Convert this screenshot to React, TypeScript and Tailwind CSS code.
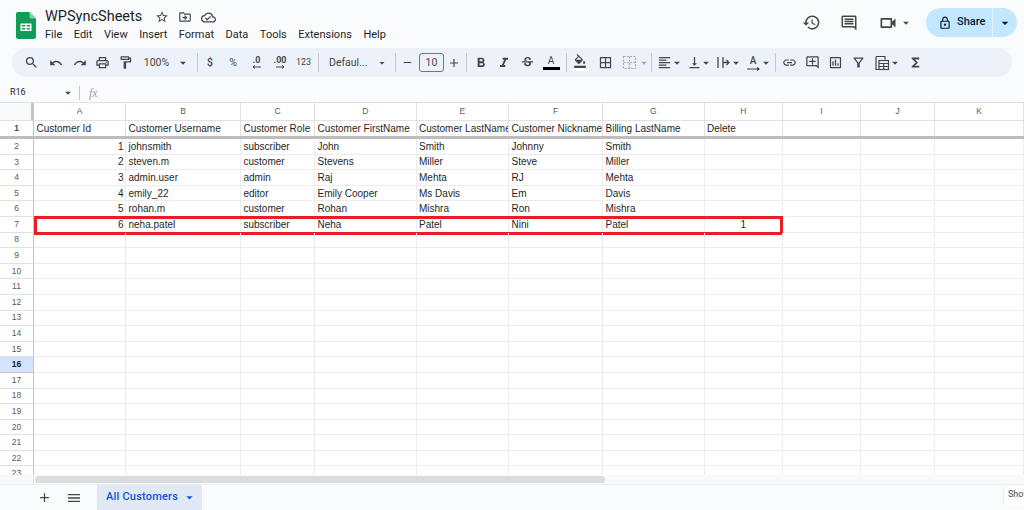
import React from 'react';
import {
  MdAdd, MdArrowDropDown, MdBorderAll, MdFormatAlignLeft, MdFormatBold, MdFormatItalic,
  MdFormatColorFill, MdFunctions, MdLink, MdMenu, MdOutlineAddComment, MdOutlineAssessment,
  MdOutlineCloudDone, MdOutlineComment, MdOutlineDriveFileMove, MdOutlineFilterAlt,
  MdOutlineFormatPaint, MdOutlineLock, MdOutlinePrint, MdOutlineVideocam, MdRedo, MdRemove,
  MdHistory, MdSearch, MdStarBorder, MdStrikethroughS, MdUndo, MdVerticalAlignBottom,
} from 'react-icons/md';

const ROW_CLASS =
  'grid grid-cols-[34px_92px_115px_74px_101.5px_92.5px_94px_101.5px_78.5px_78px_74px_89px]';

const COLUMNS = ['A', 'B', 'C', 'D', 'E', 'F', 'G', 'H', 'I', 'J', 'K'];

const HEADERS = [
  'Customer Id',
  'Customer Username',
  'Customer Role',
  'Customer FirstName',
  'Customer LastName',
  'Customer Nickname',
  'Billing LastName',
  'Delete',
];

const CUSTOMERS = [
  ['1', 'johnsmith', 'subscriber', 'John', 'Smith', 'Johnny', 'Smith', ''],
  ['2', 'steven.m', 'customer', 'Stevens', 'Miller', 'Steve', 'Miller', ''],
  ['3', 'admin.user', 'admin', 'Raj', 'Mehta', 'RJ', 'Mehta', ''],
  ['4', 'emily_22', 'editor', 'Emily Cooper', 'Ms Davis', 'Em', 'Davis', ''],
  ['5', 'rohan.m', 'customer', 'Rohan', 'Mishra', 'Ron', 'Mishra', ''],
  ['6', 'neha.patel', 'subscriber', 'Neha', 'Patel', 'Nini', 'Patel', '1'],
];

const MENU = ['File', 'Edit', 'View', 'Insert', 'Format', 'Data', 'Tools', 'Extensions', 'Help'];

const ROW_NUMBERS = Array.from({ length: 22 }, (_, i) => i + 2);

// small dropdown caret, centred in a narrow slot so neighbours stay put
const Caret: React.FC<{ className?: string }> = ({ className = '' }) => (
  <span className={`flex items-center justify-center text-[#444746] ${className}`}>
    <MdArrowDropDown size={14} />
  </span>
);

const Tool: React.FC<{ className: string; children: React.ReactNode }> = ({ className, children }) => (
  <span className={`flex h-full shrink-0 items-center justify-center text-[#444746] ${className}`}>
    {children}
  </span>
);

const Sep: React.FC<{ className: string }> = ({ className }) => (
  <span className={`h-[19px] w-px shrink-0 bg-[#c7c7c7] ${className}`} />
);

const SheetsLogo = () => (
  <svg width="20" height="27" viewBox="0 0 20 27" className="shrink-0">
    <path d="M2 0h11.5L20 6.5V25a2 2 0 0 1-2 2H2a2 2 0 0 1-2-2V2a2 2 0 0 1 2-2z" fill="#0f9d58" />
    <path d="M13.5 0L20 6.500h-5a1.500 1.500 0 0 1-1.500-1.500z" fill="#87ceac" />
    <path d="M4.500 11.500h11v7.500h-11zM6 13v1.600h3.300V13zm4.700 0v1.600H14V13zM6 16v1.600h3.300V16zm4.700 0v1.600H14V16z" fill="#fff" fillRule="evenodd" />
  </svg>
);

const MergeIcon = () => (
  <svg width="15" height="15" viewBox="0 0 15 15" fill="none" stroke="#a8abad" strokeWidth="1.200" strokeDasharray="2 1.300">
    <rect x="1.500" y="1.500" width="12" height="12" />
    <path d="M7.500 1.500v12M1.500 7.500h12" />
  </svg>
);

const WrapIcon = () => (
  <svg width="15" height="15" viewBox="0 0 15 15" fill="none" stroke="#444746" strokeWidth="1.300">
    <path d="M2 2v11M7 2v11M7 7.500h6M10.500 5l2.500 2.500-2.500 2.500" />
  </svg>
);

const RotateIcon = () => (
  <span className="relative flex h-[17px] w-[14px] flex-col items-center">
    <span className="text-[10px] font-medium leading-[13px]">A</span>
    <svg width="13" height="4" viewBox="0 0 13 4" fill="none" stroke="#444746" strokeWidth="1.200">
      <path d="M0 2h12M10 0.500 12 2l-2 1.500" />
    </svg>
  </span>
);

const TableFnIcon = () => (
  <svg width="16" height="16" viewBox="0 0 16 16" fill="none" stroke="#444746" strokeWidth="1.200">
    <path d="M2 1.500h9v3M2 1.500v13h6" />
    <rect x="5" y="5.500" width="9.500" height="9" />
    <path d="M5 8.500h9.500M5 11.500h9.500M9.700 8.500v6" />
  </svg>
);

const Toolbar = () => (
  <div className="mx-3 flex h-[29px] items-center rounded-full bg-[#edf2fa] pl-[7px] font-['Roboto',sans-serif]">
    <Tool className="w-6"><MdSearch size={15} /></Tool>
    <Tool className="w-[25px]"><MdUndo size={14} /></Tool>
    <Tool className="w-[23px]"><MdRedo size={14} /></Tool>
    <Tool className="w-[23px]"><MdOutlinePrint size={15} /></Tool>
    <Tool className="w-[23px]"><MdOutlineFormatPaint size={15} /></Tool>
    <Tool className="w-[39px] text-[10.500px]">100%</Tool>
    <Caret className="w-[14px]" />
    <Sep className="ml-[7px] mr-[1px]" />
    <Tool className="w-[22px] text-[10.500px] font-medium">$</Tool>
    <Tool className="w-6 text-[10.500px]">%</Tool>
    <Tool className="w-[23px] flex-col text-[9px] font-bold leading-[9px]">
      .0
      <svg width="10" height="4" viewBox="0 0 10 4" fill="none" stroke="#444746" strokeWidth="1"><path d="M9 2H1M3 0.500 1 2l2 1.500" /></svg>
    </Tool>
    <Tool className="w-6 flex-col text-[9px] font-bold leading-[9px]">
      .00
      <svg width="10" height="4" viewBox="0 0 10 4" fill="none" stroke="#444746" strokeWidth="1"><path d="M1 2h8M7 0.500 9 2 7 3.500" /></svg>
    </Tool>
    <Tool className="w-[23px] text-[9px]">123</Tool>
    <Sep className="ml-[3px] mr-[10px]" />
    <Tool className="w-[47px] justify-start text-[10.500px]">Defaul...</Tool>
    <Caret className="w-3" />
    <Sep className="ml-[7px]" />
    <Tool className="w-[22px]"><MdRemove size={13} /></Tool>
    <span className="ml-px flex h-[19px] w-[25px] shrink-0 items-center justify-center rounded-[3px] border border-[#747775] text-[10.500px] text-[#444746]">10</span>
    <Tool className="w-5"><MdAdd size={14} /></Tool>
    <Sep className="ml-[2px] mr-[2px]" />
    <Tool className="w-[23px]"><MdFormatBold size={16} /></Tool>
    <Tool className="w-[23px]"><MdFormatItalic size={16} /></Tool>
    <Tool className="w-6"><MdStrikethroughS size={15} /></Tool>
    <Tool className="w-6 flex-col">
      <span className="text-[10px] leading-[12px]">A</span>
      <span className="h-[3px] w-[17px] bg-black" />
    </Tool>
    <Sep className="ml-[3px]" />
    <Tool className="w-[26px] flex-col">
      <MdFormatColorFill size={14} />
      <span className="h-[3px] w-[17px] bg-white" />
    </Tool>
    <Tool className="w-6"><MdBorderAll size={15} /></Tool>
    <Tool className="w-6"><MergeIcon /></Tool>
    <Tool className="w-[6px] text-[#a8abad]"><MdArrowDropDown size={14} className="shrink-0 text-[#a8abad]" /></Tool>
    <Sep className="ml-[4px] mr-[2px]" />
    <Tool className="w-5"><MdFormatAlignLeft size={15} /></Tool>
    <Tool className="w-[6px]"><MdArrowDropDown size={14} className="shrink-0" /></Tool>
    <Tool className="ml-1 w-5"><MdVerticalAlignBottom size={15} /></Tool>
    <Tool className="w-[6px] -ml-[1px]"><MdArrowDropDown size={14} className="shrink-0" /></Tool>
    <Tool className="ml-1 w-5"><WrapIcon /></Tool>
    <Tool className="w-[6px]"><MdArrowDropDown size={14} className="shrink-0" /></Tool>
    <Tool className="ml-1 w-5"><RotateIcon /></Tool>
    <Tool className="w-[6px]"><MdArrowDropDown size={14} className="shrink-0" /></Tool>
    <Sep className="ml-[6px] mr-[1px]" />
    <Tool className="w-6"><MdLink size={15} /></Tool>
    <Tool className="w-[23px]"><MdOutlineAddComment size={15} /></Tool>
    <Tool className="w-[23px]"><MdOutlineAssessment size={15} /></Tool>
    <Tool className="w-[23px]"><MdOutlineFilterAlt size={15} /></Tool>
    <Tool className="w-[23px]"><TableFnIcon /></Tool>
    <Tool className="w-[6px] -ml-[1px]"><MdArrowDropDown size={14} className="shrink-0" /></Tool>
    <Tool className="ml-2 w-[18px]"><MdFunctions size={15} /></Tool>
  </div>
);

const Header = () => (
  <header className="flex h-[48px] items-start pl-4 pr-[7px] pt-[8px] font-['Roboto',sans-serif]">
    <span className="mt-[4px]"><SheetsLogo /></span>
    <div className="ml-[9px] flex flex-col">
      <div className="flex h-[18px] items-center text-[#444746]">
        <span className="text-[14.500px] leading-[18px] text-[#1f1f1f]">WPSyncSheets</span>
        <MdStarBorder size={14} className="ml-[13px]" />
        <MdOutlineDriveFileMove size={14} className="ml-[9px]" />
        <MdOutlineCloudDone size={15} className="ml-[9px]" />
      </div>
      <nav className="mt-[1px] flex h-[16px] items-center gap-[11.500px] text-[11px] leading-[16px] text-[#1f1f1f]">
        {MENU.map((item) => (
          <span key={item}>{item}</span>
        ))}
      </nav>
    </div>
    <div className="ml-auto flex items-center text-[#444746]">
      <MdHistory size={19} />
      <MdOutlineComment size={18} className="ml-[19px]" />
      <MdOutlineVideocam size={20} className="ml-[20px]" />
      <MdArrowDropDown size={14} className="ml-[1px]" />
      <div className="ml-[13px] flex h-[29px] w-[91px] items-center rounded-full bg-[#c2e7ff] text-[#001d35]">
        <MdOutlineLock size={14} className="ml-[12px]" />
        <span className="ml-[5px] text-[11px] font-medium">Share</span>
        <span className="ml-[7px] h-full w-px bg-[#e3f3ff]" />
        <MdArrowDropDown size={16} className="ml-[4px]" />
      </div>
    </div>
  </header>
);

const FormulaBar = () => (
  <div className="mt-[6px] flex h-[20px] items-center border-b border-[#e1e3e1] font-['Roboto',sans-serif] text-[#444746]">
    <span className="ml-[10px] w-[51px] text-[9px] text-[#1f1f1f]">R16</span>
    <MdArrowDropDown size={14} />
    <span className="ml-[4px] h-[14px] w-px bg-[#c7c7c7]" />
    <span className="ml-[9px] font-['Liberation_Serif',serif] text-[12px] italic text-[#9aa0a6]">fx</span>
  </div>
);

const Grid = () => (
  <div className="h-[372px] overflow-hidden bg-white font-['Liberation_Sans',sans-serif] text-[10px] text-[#1f1f1f]">
    <div className={`${ROW_CLASS} h-[18px]`}>
      <div className="border-b border-r-[3px] border-[#e1e1e1] border-r-[#c4c4c4] bg-[#f8f9fa]" />
      {COLUMNS.map((c) => (
        <div key={c} className="flex items-center justify-center border-b border-r border-[#e1e1e1] text-[8.500px] text-[#575a5a]">
          {c}
        </div>
      ))}
    </div>
    <div className={`${ROW_CLASS} h-[18px] border-b-[3px] border-[#bdbdbd]`}>
      <div className="flex items-center justify-center border-r border-[#c4c4c4] text-[8.500px] font-bold text-[#444746]">1</div>
      {COLUMNS.map((c, i) => (
        <div key={c} className="flex items-center overflow-hidden whitespace-nowrap border-r border-[#e1e1e1] pl-[2.500px]">
          {HEADERS[i]}
        </div>
      ))}
    </div>
    {ROW_NUMBERS.map((n) => {
      const row = CUSTOMERS[n - 2];
      const selected = n === 16;
      return (
        <div key={n} className={`${ROW_CLASS} relative h-[15.600px]`}>
          <div
            className={
              selected
                ? 'flex items-center justify-center border-b border-r border-[#c4c4c4] bg-[#d3e3fd] text-[8.500px] font-bold text-[#0b1f3a]'
                : 'flex items-center justify-center border-b border-r border-[#e1e1e1] border-r-[#c4c4c4] text-[8.500px] text-[#575a5a]'
            }
          >
            {n}
          </div>
          {COLUMNS.map((c, i) => {
            const value = row ? row[i] : '';
            const align =
              i === 0
                ? 'justify-end pr-[1.500px]'
                : i === 7
                  ? 'justify-center'
                  : 'pl-[2.500px]';
            return (
              <div key={c} className={`flex items-center overflow-hidden whitespace-nowrap border-b border-r border-[#ececec] ${align}`}>
                {value}
              </div>
            );
          })}
          {n === 7 && (
            <div className="pointer-events-none absolute -top-[1px] left-[34px] h-[19px] w-[749px] border-[3px] border-[#ed1c24]" />
          )}
        </div>
      );
    })}
  </div>
);

const ScrollBar = () => (
  <div className="flex h-[9px] items-center bg-[#f8f9fa]">
    <div className="h-full w-[34px] border-r border-[#e1e1e1]" />
    <div className="ml-px h-[7px] w-[570px] rounded-full bg-[#dadce0]" />
  </div>
);

const SheetTabs = () => (
  <div className="flex h-[26px] items-center border-t border-[#eceef1] bg-[#f9fbfd] font-['Roboto',sans-serif] text-[#444746]">
    <MdAdd size={15} className="ml-[37px]" />
    <MdMenu size={16} className="ml-[14px]" />
    <div className="ml-[15px] flex h-full w-[105px] items-center bg-[#e1e9f7] pl-[9px] text-[11px] font-medium tracking-[0.2px] text-[#0b57d0]">
      All Customers
      <MdArrowDropDown size={15} className="ml-[4px]" />
    </div>
    <div className="ml-auto flex h-[20px] w-[21px] items-center self-start overflow-hidden rounded-l-[3px] border-l border-[#eceef1] bg-white pl-[4px] text-[9px]">
      Show
    </div>
  </div>
);

const App: React.FC = () => (
  <div className="flex h-[510px] w-[1024px] flex-col overflow-hidden bg-[#f9fbfd]">
    <Header />
    <Toolbar />
    <FormulaBar />
    <Grid />
    <ScrollBar />
    <SheetTabs />
  </div>
);

export default App;
